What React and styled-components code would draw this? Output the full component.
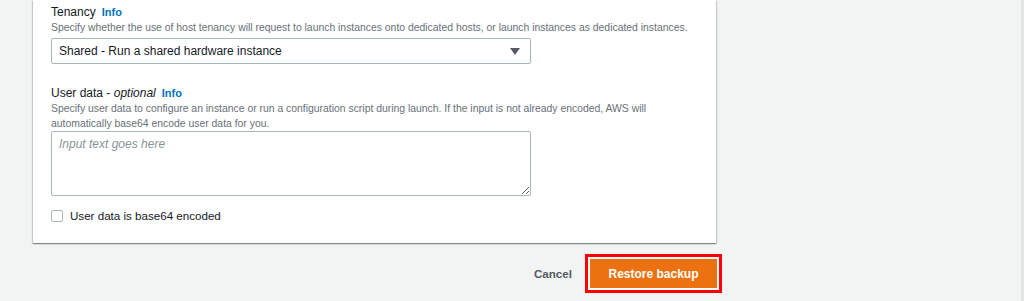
import React from 'react';
import styled, { createGlobalStyle } from 'styled-components';

const GlobalStyle = createGlobalStyle`
  body {
    margin: 0;
    background: #f2f3f3;
    font-family: "Liberation Sans", Arial, sans-serif;
    color: #16191f;
  }
`;

const Page = styled.div`
  width: 1024px;
  height: 301px;
  overflow: hidden;
  box-sizing: border-box;
  border-right: 3px solid #e3e4e4;
  display: flex;
  flex-direction: column;
`;

const Card = styled.div`
  margin-left: 33px;
  width: 683px;
  box-sizing: border-box;
  background: #fff;
  padding: 4px 18px 20px;
  box-shadow: 0 1px 1px 0 rgba(0, 28, 36, 0.3), 1px 1px 1px 0 rgba(0, 28, 36, 0.15),
    -1px 1px 1px 0 rgba(0, 28, 36, 0.15);
`;

const Field = styled.div`
  margin-bottom: ${(p) => p.gap || 0}px;
`;

const Label = styled.div`
  font-size: 12px;
  line-height: 16px;
  display: flex;
  align-items: baseline;
  gap: 6px;

  em {
    font-style: italic;
  }
`;

const Info = styled.span`
  color: #0073bb;
  font-weight: bold;
  font-size: 11px;
`;

const Description = styled.div`
  font-size: 10.4px;
  line-height: 15px;
  color: #687078;
  margin-bottom: ${(p) => p.after || 0}px;
  max-width: 645px;
`;

const Select = styled.div`
  width: 480px;
  height: 26px;
  box-sizing: border-box;
  border: 1px solid #aab7b8;
  border-radius: 2px;
  display: flex;
  align-items: center;
  justify-content: space-between;
  padding: 0 10px 0 7px;
  font-size: 12px;
`;

const TextArea = styled.textarea`
  display: block;
  width: 480px;
  height: 65px;
  box-sizing: border-box;
  border: 1px solid #aab7b8;
  border-radius: 2px;
  padding: 5px 7px;
  margin: 0;
  font-family: "Liberation Sans", Arial, sans-serif;
  font-size: 12px;
  resize: vertical;

  &::placeholder {
    color: #879596;
    font-style: italic;
  }
`;

const CheckRow = styled.label`
  display: flex;
  align-items: center;
  gap: 7px;
  font-size: 11.6px;
  line-height: 14px;
  margin-top: 13px;
`;

const Box = styled.span`
  width: 12px;
  height: 12px;
  box-sizing: border-box;
  border: 1px solid #aab7b8;
  border-radius: 2px;
  background: #fff;
`;

const Footer = styled.div`
  width: 717px;
  display: flex;
  justify-content: flex-end;
  align-items: center;
  gap: 18px;
  margin-top: 16px;
`;

const Cancel = styled.span`
  font-size: 11.6px;
  font-weight: bold;
  color: #545b64;
`;

const Primary = styled.button`
  height: 29px;
  width: 127px;
  border: none;
  border-radius: 0;
  background: #ec7211;
  color: #fff;
  font-family: "Liberation Sans", Arial, sans-serif;
  font-size: 12px;
  font-weight: bold;
  box-shadow: 0 0 0 2px #fff, 0 0 0 5px #ff0000;
`;

export default function App() {
  return (
    <Page>
      <GlobalStyle />
      <Card>
        <Field gap={21}>
          <Label>
            Tenancy <Info>Info</Info>
          </Label>
          <Description after={3}>
            Specify whether the use of host tenancy will request to launch instances onto dedicated hosts, or
            launch instances as dedicated instances.
          </Description>
          <Select>
            <span>Shared - Run a shared hardware instance</span>
            <svg width="10" height="7" viewBox="0 0 10 7">
              <path d="M0 0h10L5 7z" fill="#545b64" />
            </svg>
          </Select>
        </Field>
        <Field>
          <Label>
            <span>
              User data - <em>optional</em>
            </span>
            <Info>Info</Info>
          </Label>
          <Description after={0}>
            Specify user data to configure an instance or run a configuration script during launch. If the input
            is not already encoded, AWS will automatically base64 encode user data for you.
          </Description>
          <TextArea placeholder="Input text goes here" />
          <CheckRow>
            <Box />
            User data is base64 encoded
          </CheckRow>
        </Field>
      </Card>
      <Footer>
        <Cancel>Cancel</Cancel>
        <Primary>Restore backup</Primary>
      </Footer>
    </Page>
  );
}
